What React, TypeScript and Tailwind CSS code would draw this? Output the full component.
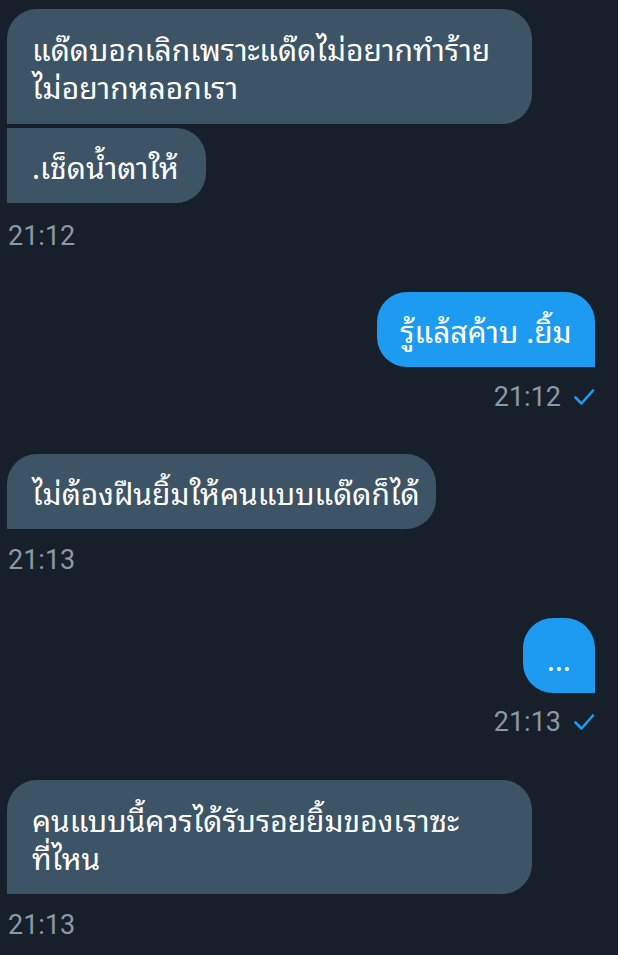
import React from 'react';

const thai = "font-['Noto_Sans_Thai_Looped','Noto_Sans_Thai','Roboto',sans-serif]";

function Check(): JSX.Element {
  return (
    <svg width="22" height="20" viewBox="0 0 22 20" fill="none">
      <path d="M2.5 10.5 L8.5 16.5 L20 3.5" stroke="#1d9bf0" strokeWidth="2.6" strokeLinecap="round" strokeLinejoin="round" />
    </svg>
  );
}

function Time({ value, out }: { value: string; out?: boolean }): JSX.Element {
  return (
    <div
      className={`flex items-center gap-[12px] h-[28px] text-[27px] text-[#8b98a5] font-['Roboto',sans-serif] ${
        out ? 'justify-end pr-[23px]' : 'pl-[8px]'
      }`}
    >
      <span>{value}</span>
      {out && <Check />}
    </div>
  );
}

function App(): JSX.Element {
  return (
    <section className="w-[618px] h-[955px] overflow-hidden bg-[#17202a] pt-[9px]">
      {/* incoming */}
      <div className="flex flex-col gap-[4px] pl-[7px]">
        <div className={`w-[525px] h-[115px] bg-[#3d5466] text-white rounded-[30px] rounded-bl-none px-[25px] pt-[20px] text-[30px] leading-[38px] whitespace-nowrap ${thai}`}>
          แด๊ดบอกเลิกเพราะแด๊ดไม่อยากทำร้าย
          <br />
          ไม่อยากหลอกเรา
        </div>
        <div className={`w-[199px] h-[75px] flex items-center bg-[#3d5466] text-white rounded-r-[30px] px-[25px] text-[30px] leading-[38px] whitespace-nowrap ${thai}`}>
          .เช็ดน้ำตาให้
        </div>
      </div>
      <div className="mt-[19px]">
        <Time value="21:12" />
      </div>

      {/* outgoing */}
      <div className="mt-[42px] flex justify-end pr-[23px]">
        <div className={`w-[218px] h-[75px] flex items-center justify-center bg-[#1d9bf0] text-white rounded-[30px] rounded-br-none text-[30px] leading-[38px] whitespace-nowrap ${thai}`}>
          รู้แล้สค้าบ .ยิ้ม
        </div>
      </div>
      <div className="mt-[16px]">
        <Time value="21:12" out />
      </div>

      <div className="mt-[43px] pl-[7px]">
        <div className={`w-[429px] h-[75px] flex items-center bg-[#3d5466] text-white rounded-[30px] rounded-bl-none px-[25px] text-[30px] leading-[38px] whitespace-nowrap ${thai}`}>
          ไม่ต้องฝืนยิ้มให้คนแบบแด๊ดก็ได้
        </div>
      </div>
      <div className="mt-[17px]">
        <Time value="21:13" />
      </div>

      <div className="mt-[44px] flex justify-end pr-[23px]">
        <div className="w-[72px] h-[75px] flex justify-center gap-[4px] pt-[49px] bg-[#1d9bf0] rounded-[30px] rounded-br-none">
          <span className="w-[4px] h-[4px] rounded-full bg-white" />
          <span className="w-[4px] h-[4px] rounded-full bg-white" />
          <span className="w-[4px] h-[4px] rounded-full bg-white" />
        </div>
      </div>
      <div className="mt-[15px]">
        <Time value="21:13" out />
      </div>

      <div className="mt-[44px] pl-[7px]">
        <div className={`w-[525px] h-[114px] bg-[#3d5466] text-white rounded-[30px] rounded-bl-none px-[25px] pt-[20px] text-[30px] leading-[38px] whitespace-nowrap ${thai}`}>
          คนแบบนี้ควรได้รับรอยยิ้มของเราซะ
          <br />
          ที่ไหน
        </div>
      </div>
      <div className="mt-[17px]">
        <Time value="21:13" />
      </div>
    </section>
  );
}

export default App;
